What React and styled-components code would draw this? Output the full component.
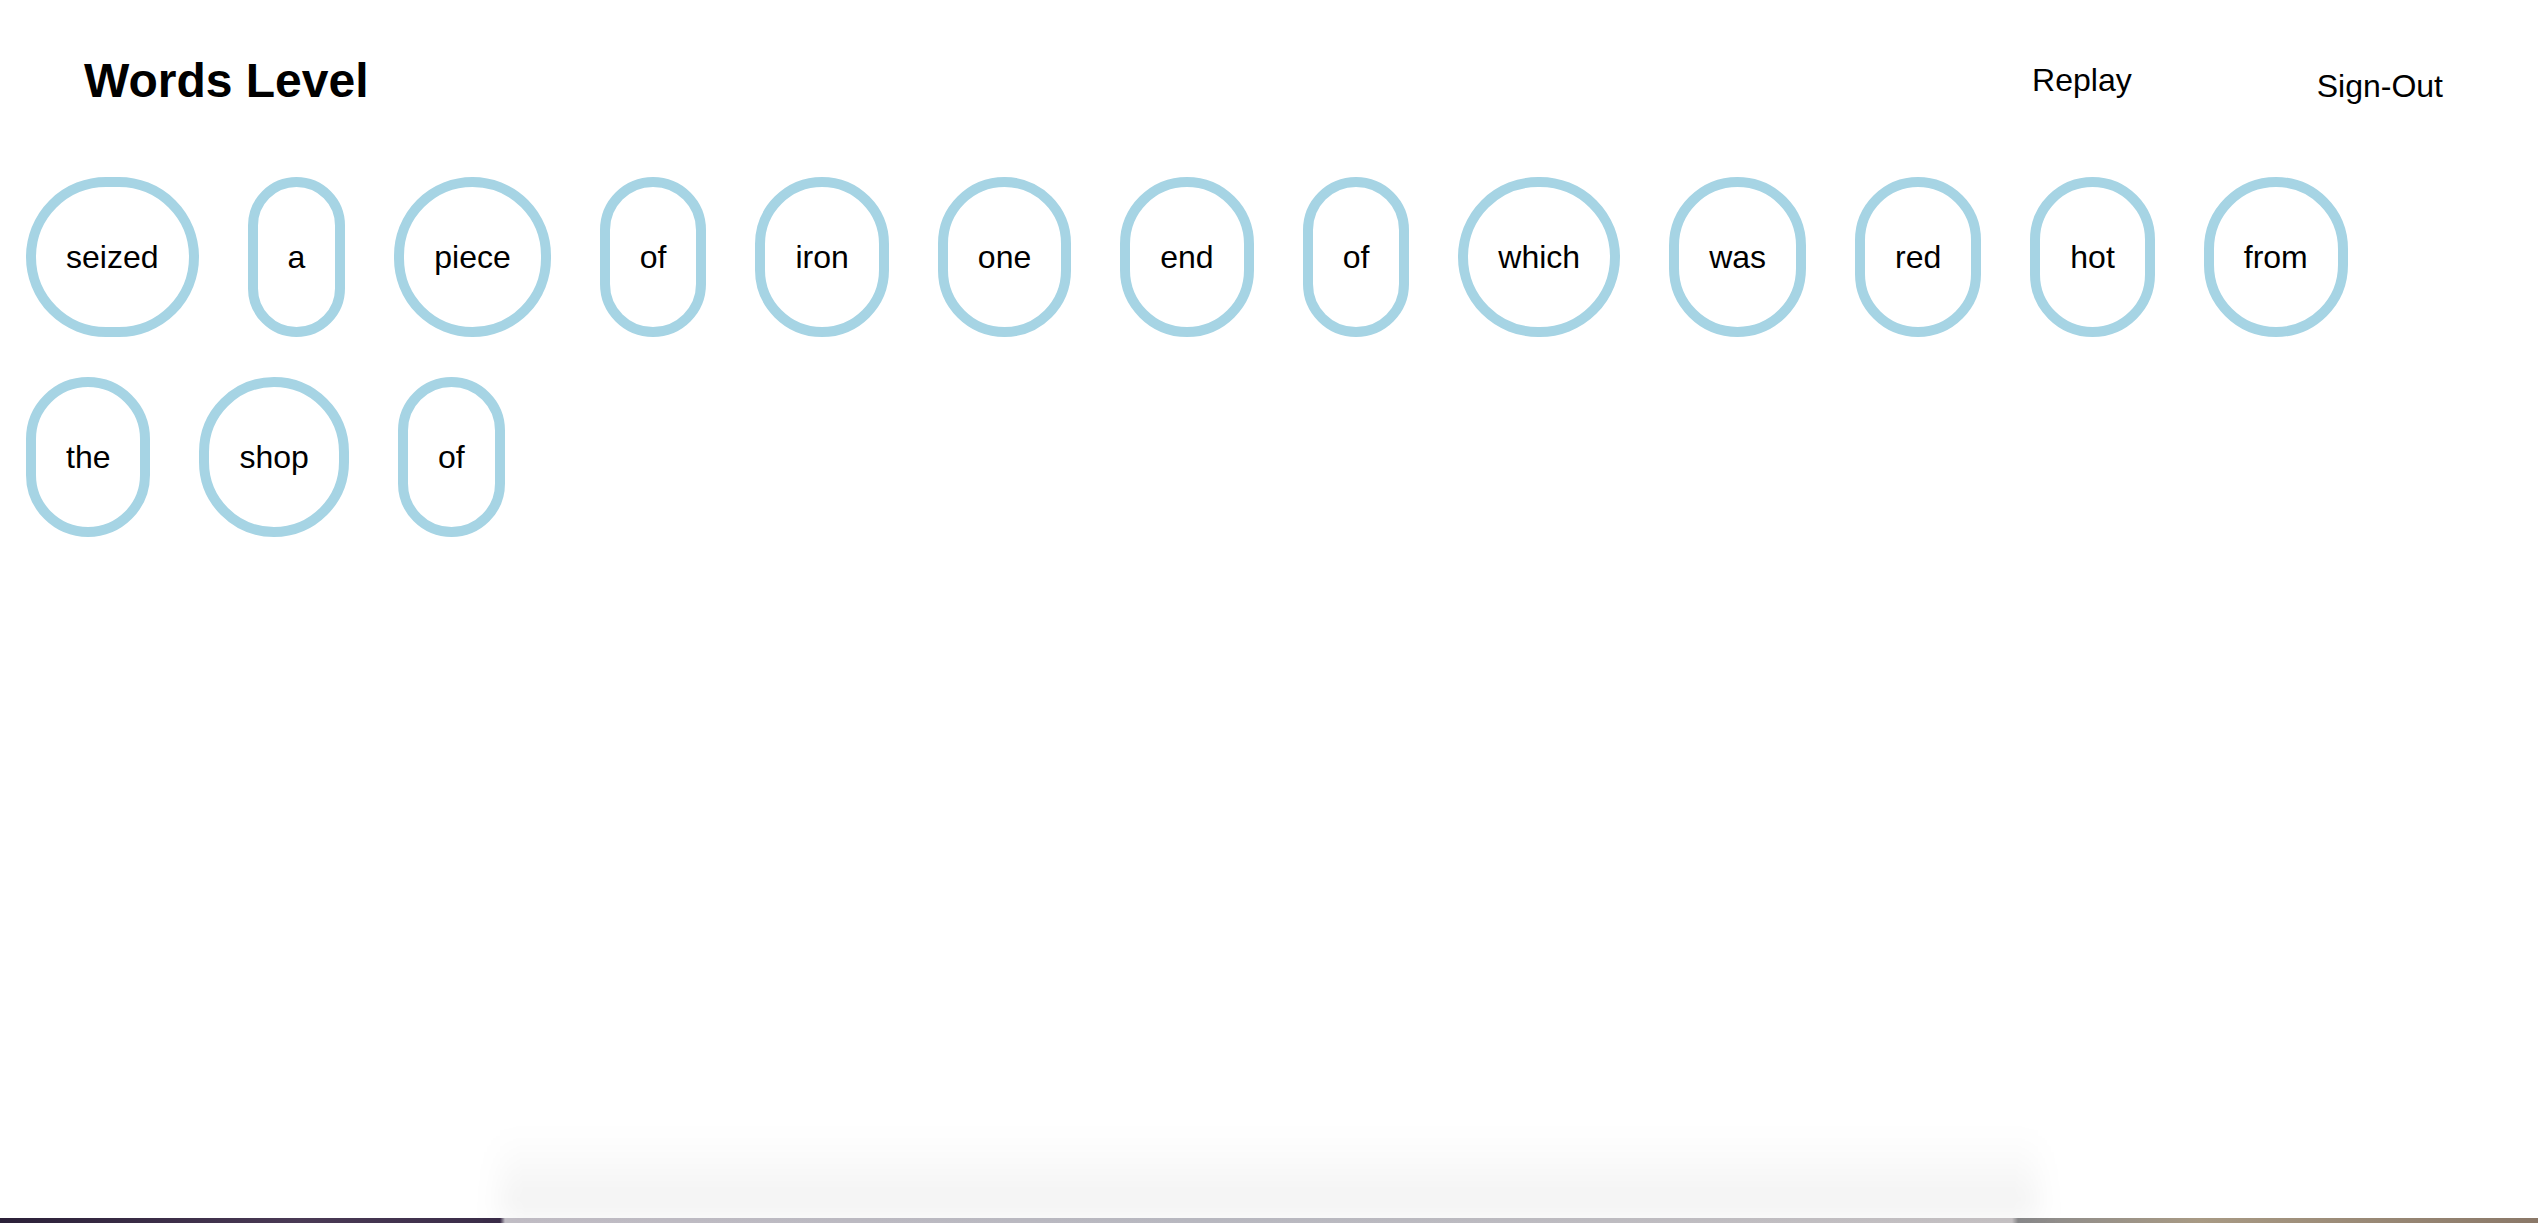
import React from 'react';
import styled, { createGlobalStyle } from 'styled-components';

const GlobalStyle = createGlobalStyle`
  html, body {
    margin: 0;
    padding: 0;
    background: #ffffff;
  }
  body {
    font-family: "Liberation Sans", Arial, Helvetica, sans-serif;
    color: #000000;
  }
`;

const Page = styled.div`
  min-height: 100vh;
  display: flex;
  flex-direction: column;
  overflow: hidden;
`;

const Header = styled.header`
  display: flex;
  justify-content: space-between;
  align-items: flex-start;
  padding: 53px 95px 0 84px;
`;

const Title = styled.h2`
  margin: 0;
  font-size: 48px;
  line-height: 56px;
  font-weight: bold;
`;

const Nav = styled.nav`
  display: flex;
  align-items: flex-start;
  gap: 185px;
`;

const NavItem = styled.span`
  font-size: 32px;
  line-height: 36px;
  margin-top: ${(p) => p.$drop}px;
  cursor: pointer;
`;

const Words = styled.div`
  display: flex;
  flex-wrap: wrap;
  column-gap: 49px;
  row-gap: 40px;
  padding: 68px 26px 0 26px;
`;

const Bubble = styled.div`
  box-sizing: border-box;
  height: 160px;
  padding: 0 30px;
  display: flex;
  align-items: center;
  justify-content: center;
  border: 10px solid #a6d4e4;
  border-radius: 100px;
  font-size: 32px;
  line-height: 36px;
  white-space: nowrap;
`;

const Dock = styled.div`
  margin-top: auto;
  display: flex;
  flex-direction: column;
`;

const Glow = styled.div`
  height: 86px;
  margin: 0 500px;
  background: linear-gradient(to bottom, rgba(0, 0, 0, 0), rgba(0, 0, 0, 0.06));
  filter: blur(14px);
`;

const Strip = styled.div`
  height: 5px;
  background: linear-gradient(
    to right,
    #2b2038 0px,
    #4a3a55 300px,
    #3a2c48 500px,
    #c4c0c8 505px,
    #bcbcc4 1200px,
    #c8c4c6 2012px,
    #8a8a8c 2018px,
    #a89a84 2200px,
    #8a7868 2538px
  );
`;

const words = 'seized a piece of iron one end of which was red hot from the shop of'.split(' ');

const App = () => {
  return (
    <Page>
      <GlobalStyle />
      <Header>
        <Title>Words Level</Title>
        <Nav>
          <NavItem $drop={9}>Replay</NavItem>
          <NavItem $drop={15}>Sign-Out</NavItem>
        </Nav>
      </Header>
      <Words>
        {words.map((word, i) => (
          <Bubble key={i}>{word}</Bubble>
        ))}
      </Words>
      <Dock>
        <Glow />
        <Strip />
      </Dock>
    </Page>
  );
};

export default App;
